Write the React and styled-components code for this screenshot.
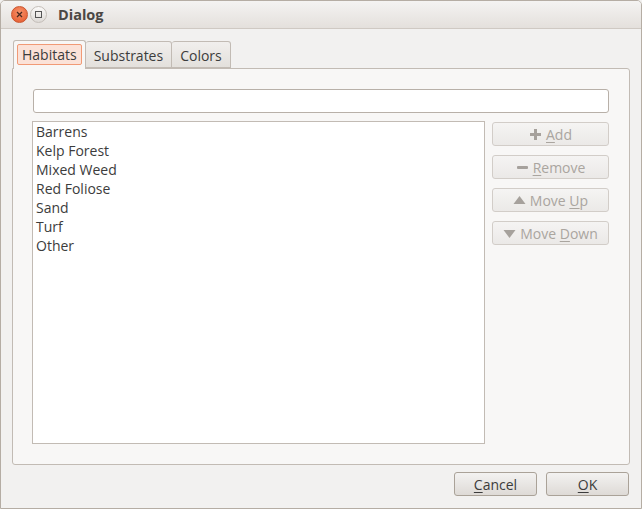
import React from "react";
import styled, { createGlobalStyle } from "styled-components";

const Global = createGlobalStyle`
  html, body {
    margin: 0;
    padding: 0;
    background: #f2f1f0;
  }
  * { box-sizing: border-box; }
`

const Window = styled.div`
  width: 642px;
  height: 509px;
  display: flex;
  flex-direction: column;
  background: #f2f1f0;
  border: 1px solid #b5ada4;
  border-radius: 5px 5px 0 0;
  font-family: "Open Sans", "DejaVu Sans", sans-serif;
  font-size: 14px;
  color: #3c3c3c;
  overflow: hidden;
`

const TitleBar = styled.div`
  height: 28px;
  flex: none;
  display: flex;
  align-items: center;
  padding-left: 10px;
  gap: 2px;
  background: linear-gradient(#f4f3f2, #e4e0dc);
  border-bottom: 1px solid #cfc9c3;
`

const CircleButton = styled.div`
  width: 17px;
  height: 17px;
  border-radius: 50%;
  display: flex;
  align-items: center;
  justify-content: center;
  background: ${p => p.close
    ? "radial-gradient(circle at 50% 35%, #f7926a, #e4572a)"
    : "linear-gradient(#fbfaf9, #dedad6)"};
  border: 1px solid ${p => p.close ? "#c9552e" : "#c4beb8"};
`

const Title = styled.div`
  margin-left: 9px;
  font-weight: bold;
  font-size: 14.5px;
  color: #4b4845;
`

const Body = styled.div`
  flex: 1;
  display: flex;
  flex-direction: column;
  padding: 12px 11px 12px 11px;
`

const TabBar = styled.div`
  display: flex;
  height: 27px;
  padding-left: 1px;
  position: relative;
  z-index: 1;
`

const Tab = styled.div`
  height: ${p => p.active ? "29px" : "27px"};
  margin-top: ${p => p.active ? "-1px" : "0"};
  padding: 3px;
  border: 1px solid #c2bbb4;
  border-bottom: ${p => p.active ? "none" : "1px solid #c2bbb4"};
  border-left: ${p => p.first || p.active ? "1px solid #c2bbb4" : "none"};
  border-radius: 3px 3px 0 0;
  background: ${p => p.active ? "#f8f7f6" : "linear-gradient(#f1efed, #e3e0dc)"};
  display: flex;
`

const TabLabel = styled.div`
  padding: 0 4px;
  line-height: 19px;
  height: 21px;
  border: 1px solid ${p => p.focus ? "#f19a76" : "transparent"};
  border-radius: 2px;
  background: ${p => p.focus ? "#fbe2d8" : "transparent"};
  color: #3c3c3c;
`

const Pane = styled.div`
  flex: 1;
  display: flex;
  flex-direction: column;
  gap: 8px;
  padding: 20px;
  background: #f8f7f6;
  border: 1px solid #c2bbb4;
  border-radius: 0 3px 3px 3px;
`

const TextInput = styled.input`
  height: 24px;
  flex: none;
  border: 1px solid #b8b0a8;
  border-radius: 3px;
  background: #fff;
  font: inherit;
  outline: none;
`

const Row = styled.div`
  flex: 1;
  display: flex;
  gap: 7px;
  margin-left: -1px;
`

const List = styled.div`
  width: 453px;
  background: #fff;
  border: 1px solid #c2bbb4;
  padding: 0 3px;
`

const Item = styled.div`
  height: 19px;
  line-height: 19px;
  color: #3c3c3c;
`

const Side = styled.div`
  display: flex;
  flex-direction: column;
  gap: 9px;
  width: 117px;
  padding-top: 1px;
`

const Button = styled.div`
  height: 24px;
  width: ${p => p.w || "117px"};
  display: flex;
  align-items: center;
  justify-content: center;
  gap: 4px;
  border-radius: 3px;
  border: 1px solid ${p => p.disabled ? "#d2cdc8" : "#aaa298"};
  background: ${p => p.disabled
    ? "linear-gradient(#f5f4f3, #ebe9e7)"
    : "linear-gradient(#f3f2f1, #dedad6)"};
  color: ${p => p.disabled ? "#aaa59f" : "#3c3c3c"};
  font-size: 14px;
`

const Key = styled.span`
  text-decoration: underline;
  text-underline-offset: 2px;
`

const Footer = styled.div`
  display: flex;
  justify-content: flex-end;
  gap: 9px;
  padding-top: 7px;
  padding-right: 1px;
`

const Icon = ({ kind }) => {
  const fill = "#a6a19c";
  if (kind === "plus")
    return (
      <svg width="13" height="13" viewBox="0 0 13 13">
        <path d="M5 1h3v4h4v3H8v4H5V8H1V5h4z" fill={fill} />
      </svg>
    );
  if (kind === "minus")
    return (
      <svg width="13" height="13" viewBox="0 0 13 13">
        <rect x="1" y="5" width="11" height="3" rx="1" fill={fill} />
      </svg>
    );
  if (kind === "up")
    return (
      <svg width="13" height="13" viewBox="0 0 13 13">
        <path d="M6.5 2L12.5 10H0.5z" fill={fill} />
      </svg>
    );
  return (
    <svg width="13" height="13" viewBox="0 0 13 13">
      <path d="M0.5 3H12.5L6.5 11z" fill={fill} />
    </svg>
  );
};

const items = ["Barrens", "Kelp Forest", "Mixed Weed", "Red Foliose", "Sand", "Turf", "Other"];

export default function App() {
  return (
    <>
      <Global />
      <Window>
        <TitleBar>
          <CircleButton close>
            <svg width="7" height="7" viewBox="0 0 7 7">
              <path d="M1 1L6 6M6 1L1 6" stroke="#4a2a20" strokeWidth="1.3" />
            </svg>
          </CircleButton>
          <CircleButton>
            <svg width="7" height="7" viewBox="0 0 7 7">
              <rect x="0.5" y="0.5" width="6" height="6" fill="none" stroke="#555" strokeWidth="1" />
            </svg>
          </CircleButton>
          <Title>Dialog</Title>
        </TitleBar>
        <Body>
          <TabBar>
            <Tab active first>
              <TabLabel focus>Habitats</TabLabel>
            </Tab>
            <Tab>
              <TabLabel>Substrates</TabLabel>
            </Tab>
            <Tab>
              <TabLabel>Colors</TabLabel>
            </Tab>
          </TabBar>
          <Pane>
            <TextInput />
            <Row>
              <List>
                {items.map(i => <Item key={i}>{i}</Item>)}
              </List>
              <Side>
                <Button disabled><Icon kind="plus" /><span><Key>A</Key>dd</span></Button>
                <Button disabled><Icon kind="minus" /><span><Key>R</Key>emove</span></Button>
                <Button disabled><Icon kind="up" /><span>Move <Key>U</Key>p</span></Button>
                <Button disabled><Icon kind="down" /><span>Move <Key>D</Key>own</span></Button>
              </Side>
            </Row>
          </Pane>
          <Footer>
            <Button w="83px"><span><Key>C</Key>ancel</span></Button>
            <Button w="83px"><span><Key>O</Key>K</span></Button>
          </Footer>
        </Body>
      </Window>
    </>
  );
}
